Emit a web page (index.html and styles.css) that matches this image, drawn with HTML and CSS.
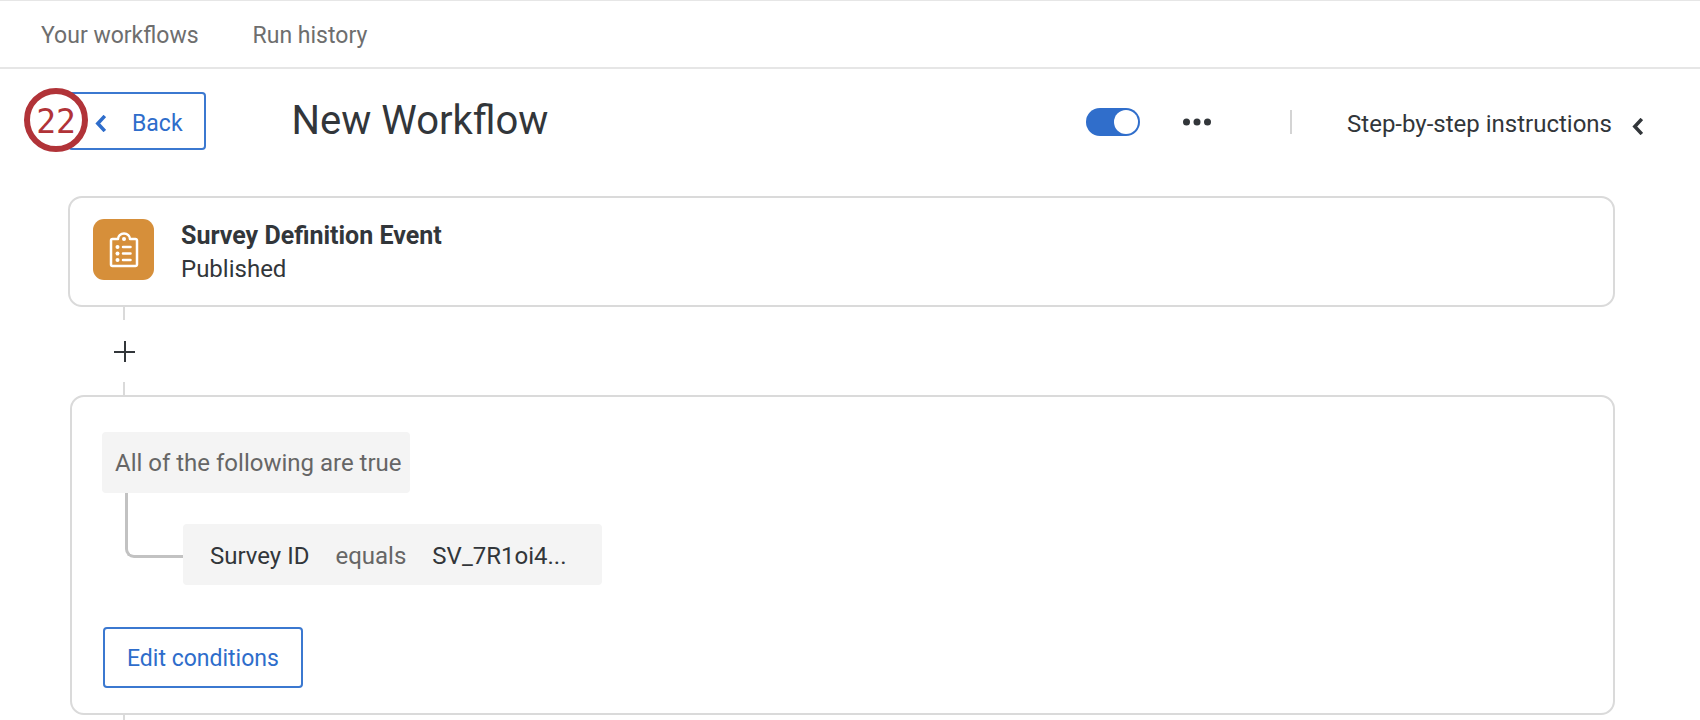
FILE: index.html
```html
<!DOCTYPE html>
<html lang="en">
<head>
  <meta charset="UTF-8">
  <meta name="viewport" content="width=device-width, initial-scale=1.0">
  <title>New Workflow</title>
  <link rel="stylesheet" href="styles.css">
</head>
<body>
  <nav class="tabs">
    <a href="#">Your workflows</a>
    <a href="#">Run history</a>
  </nav>

  <header class="header">
    <div class="back-wrap">
      <button class="btn back-button" type="button">
        <svg width="11" height="17" viewBox="0 0 11 17" fill="none" stroke="currentColor" stroke-width="3.500"><path d="M9.800 1 2.800 8.500l7 7.500"/></svg>
        Back
      </button>
      <span class="step-badge">22</span>
    </div>
    <h1>New Workflow</h1>
    <div class="header-actions">
      <input class="toggle" type="checkbox" aria-label="Workflow on" checked>
      <button class="more-button" type="button" aria-label="More options">
        <svg width="28" height="8" viewBox="0 0 28 8" fill="currentColor"><circle cx="3.500" cy="4" r="3.500"/><circle cx="14" cy="4" r="3.500"/><circle cx="24.500" cy="4" r="3.500"/></svg>
      </button>
      <span class="divider"></span>
      <button class="instructions-button" type="button">
        Step-by-step instructions
        <svg width="11" height="17" viewBox="0 0 11 17" fill="none" stroke="currentColor" stroke-width="3.500"><path d="M9.800 1 2.800 8.500l7 7.500"/></svg>
      </button>
    </div>
  </header>

  <main class="workflow">
    <section class="card event-card">
      <span class="event-icon">
        <svg width="30" height="36" viewBox="0 0 30 36" fill="none" stroke="#fff" stroke-width="2.500" stroke-linecap="round" stroke-linejoin="round">
          <path d="M3.500 7H9a6 5.500 0 0 1 12 0h5.500a1.500 1.500 0 0 1 1.500 1.500v24a1.500 1.500 0 0 1-1.500 1.500h-23A1.500 1.500 0 0 1 2 32.500v-24A1.500 1.500 0 0 1 3.500 7z"/>
          <path d="M14 15h7.500M14 21.500h7.500M14 28h7.500"/>
          <g fill="#fff" stroke="none"><circle cx="15" cy="7" r="2"/><circle cx="8.500" cy="15" r="2"/><circle cx="8.500" cy="21.500" r="2"/><circle cx="8.500" cy="28" r="2"/></g>
        </svg>
      </span>
      <div>
        <h2>Survey Definition Event</h2>
        <p>Published</p>
      </div>
    </section>

    <div class="connector">
      <span class="line"></span>
      <button class="add-button" type="button" aria-label="Add step">
        <svg width="22" height="22" viewBox="0 0 22 22" stroke="currentColor" stroke-width="2"><path d="M12 1v21M1 12h21"/></svg>
      </button>
      <span class="line"></span>
    </div>

    <section class="card condition-card">
      <div class="condition-group">All of the following are true</div>
      <div class="condition-row">
        <span class="branch"></span>
        <div class="condition">
          <span>Survey ID</span>
          <span class="operator">equals</span>
          <span>SV_7R1oi4...</span>
        </div>
      </div>
      <button class="btn edit-button" type="button">Edit conditions</button>
    </section>

    <div class="connector">
      <span class="line"></span>
    </div>
  </main>
</body>
</html>
```
FILE: styles.css
```css
* {
  box-sizing: border-box;
}
body {
  margin: 0;
  font-family: Roboto, sans-serif;
  font-size: 24px;
  line-height: 34px;
  color: #32363a;
  background-color: #fff;
}
h1, h2, p {
  margin: 0;
}
button {
  padding: 0;
  border: none;
  background: none;
  font: inherit;
  color: inherit;
  cursor: pointer;
}
svg {
  display: block;
}
.tabs {
  display: flex;
  align-items: center;
  gap: 54px;
  height: 69px;
  padding: 4px 0 0 41px;
  border-top: 1px solid #e6e6e6;
  border-bottom: 2px solid #e6e6e6;
  font-size: 23px;
}
.tabs a {
  color: #6e6e6e;
  text-decoration: none;
}
.header {
  display: flex;
  align-items: center;
  padding: 23px 57px 0 68px;
}
.back-wrap {
  position: relative;
}
.btn {
  border: 2px solid #3b78d0;
  border-radius: 4px;
  color: #2e6dcb;
  background-color: #fff;
  font-size: 23px;
}
.back-button {
  display: flex;
  align-items: center;
  gap: 26px;
  height: 58px;
  padding: 5px 21px 0 25px;
}
.step-badge {
  position: absolute;
  top: -4px;
  left: -44px;
  width: 64px;
  height: 64px;
  border: 6px solid #b13338;
  border-radius: 50%;
  background-color: #fff;
  color: #b13338;
  font-family: "DejaVu Sans Mono", monospace;
  font-size: 33px;
  line-height: 56px;
  text-align: center;
}
h1 {
  margin-left: 86px;
  font-size: 40px;
  line-height: 58px;
  font-weight: 400;
}
.header-actions {
  display: flex;
  align-items: center;
  margin-left: auto;
  padding-top: 2px;
}
.toggle {
  appearance: none;
  width: 54px;
  height: 28px;
  margin: 0;
  padding: 2px;
  border-radius: 14px;
  background-color: #306ecb;
  cursor: pointer;
}
.toggle::before {
  content: "";
  display: block;
  width: 24px;
  height: 24px;
  border-radius: 50%;
  background-color: #fff;
}
.toggle:checked::before {
  margin-left: auto;
}
.more-button {
  margin-left: 43px;
}
.divider {
  width: 2px;
  height: 24px;
  margin: 0 55px 0 79px;
  background-color: #d4d4d4;
}
.instructions-button {
  display: flex;
  align-items: center;
  gap: 20px;
  padding-top: 4px;
}
.instructions-button svg {
  margin-top: 4px;
}
.workflow {
  padding: 46px 85px 0 68px;
}
.card {
  border: 2px solid #dadada;
  border-radius: 14px;
}
.event-card {
  display: flex;
  gap: 27px;
  height: 111px;
  padding: 21px 23px;
}
.event-icon {
  display: flex;
  align-items: center;
  justify-content: center;
  width: 61px;
  height: 61px;
  border-radius: 11px;
  background-color: #d68f3a;
}
h2 {
  font-size: 25px;
  line-height: 33px;
  font-weight: 700;
}
.connector {
  display: flex;
  flex-direction: column;
  align-items: center;
  gap: 20px;
  width: 112px;
}
.line {
  width: 2px;
  height: 13px;
  background-color: #dadada;
}
.condition-card {
  margin-left: 2px;
  padding: 35px 30px 25px;
}
.condition-group {
  width: fit-content;
  padding: 14px 8px 13px 13px;
  border-radius: 4px;
  background-color: #f4f4f4;
  color: #666;
}
.condition-row {
  display: flex;
  margin-left: 23px;
}
.branch {
  width: 58px;
  height: 65px;
  border: solid #c2c2c2;
  border-width: 0 0 3px 3px;
  border-bottom-left-radius: 9px;
}
.condition {
  display: flex;
  gap: 26px;
  margin-top: 31px;
  padding: 15px 36px 12px 27px;
  border-radius: 4px;
  background-color: #f4f4f4;
}
.operator {
  color: #666;
}
.edit-button {
  height: 61px;
  margin: 42px 0 0 1px;
  padding: 2px 22px 0;
}
```
